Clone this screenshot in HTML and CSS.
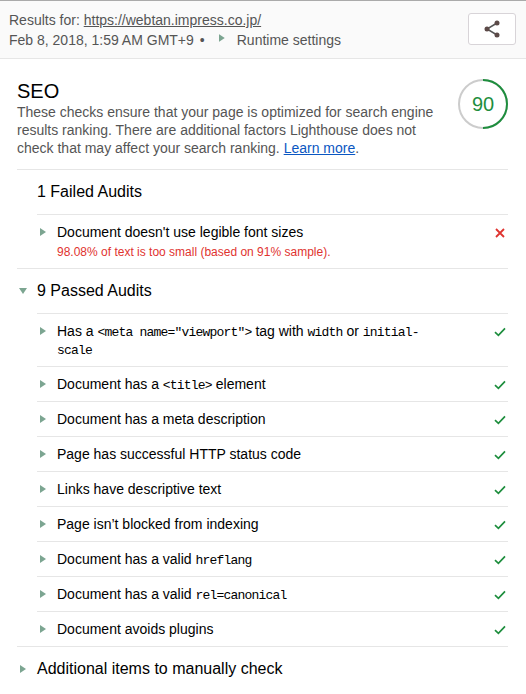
FILE: index.html
```
<!DOCTYPE html>
<html lang="en">
<head>
    <meta charset="UTF-8">
    <meta name="viewport" content="width=device-width, initial-scale=1.0">
    <title>Lighthouse Report</title>
    <link rel="stylesheet" href="styles.css">
</head>
<body>

<svg class="defs">
    <symbol id="check" viewBox="0 0 12 12">
        <path d="M1 6.2 L4.4 9.4 L11 2.4" fill="none" stroke="#1e8e3e" stroke-width="1.7"/>
    </symbol>
</svg>

<header class="header">
    <div class="header-info">
        <div>Results for: <a href="#" class="header-url">https://webtan.impress.co.jp/</a></div>
        <div class="header-meta">
            <span class="header-date">Feb 8, 2018, 1:59 AM GMT+9</span>
            <span class="dot">•</span>
            <span class="arrow"></span>
            <span class="header-settings">Runtime settings</span>
        </div>
    </div>
    <button class="share" aria-label="Share">
        <svg width="16" height="18" viewBox="0 0 16 18">
            <path d="M13 3 L3 9 L13 15" fill="none" stroke="#555" stroke-width="1.5"/>
            <circle cx="13" cy="3" r="2.5"/>
            <circle cx="3" cy="9" r="2.5"/>
            <circle cx="13" cy="15" r="2.5"/>
        </svg>
    </button>
</header>

<main class="category">
    <div class="category-header">
        <div class="category-text">
            <h1>SEO</h1>
            <p class="description">
                <span class="line">These checks ensure that your page is optimized for search engine</span>
                <span class="line">results ranking. There are additional factors Lighthouse does not</span>
                <span class="line">check that may affect your search ranking. <a href="#">Learn more</a>.</span>
            </p>
        </div>
        <div class="gauge">
            <svg class="gauge-ring" width="50" height="50" viewBox="0 0 50 50">
                <circle cx="25" cy="25" r="24" fill="none" stroke="#ccc" stroke-width="2"/>
                <path d="M25 1 A24 24 0 0 1 25 49" fill="none" stroke="#1e8e3e" stroke-width="2"/>
            </svg>
            <span class="gauge-score">90</span>
        </div>
    </div>

    <section class="group">
        <h2 class="group-title">1 Failed Audits</h2>
        <div class="audit audit-failed">
            <span class="arrow"></span>
            <div class="audit-text">
                Document doesn't use legible font sizes
                <div class="audit-error">98.08% of text is too small (based on 91% sample).</div>
            </div>
            <svg class="icon" width="12" height="12" viewBox="0 0 12 12">
                <path d="M2 2 L10 10 M10 2 L2 10" fill="none" stroke="#df332f" stroke-width="1.8"/>
            </svg>
        </div>
    </section>

    <section class="group">
        <h2 class="group-title"><span class="arrow arrow-down"></span>9 Passed Audits</h2>
        <div class="audit audit-tall">
            <span class="arrow"></span>
            <div class="audit-text">Has a <code>&lt;meta name="viewport"&gt;</code> tag with <code>width</code> or <code>initial-<br>scale</code></div>
            <svg class="icon" width="12" height="12"><use href="#check"/></svg>
        </div>
        <div class="audit">
            <span class="arrow"></span>
            <div class="audit-text">Document has a <code>&lt;title&gt;</code> element</div>
            <svg class="icon" width="12" height="12"><use href="#check"/></svg>
        </div>
        <div class="audit">
            <span class="arrow"></span>
            <div class="audit-text">Document has a meta description</div>
            <svg class="icon" width="12" height="12"><use href="#check"/></svg>
        </div>
        <div class="audit">
            <span class="arrow"></span>
            <div class="audit-text">Page has successful HTTP status code</div>
            <svg class="icon" width="12" height="12"><use href="#check"/></svg>
        </div>
        <div class="audit">
            <span class="arrow"></span>
            <div class="audit-text">Links have descriptive text</div>
            <svg class="icon" width="12" height="12"><use href="#check"/></svg>
        </div>
        <div class="audit">
            <span class="arrow"></span>
            <div class="audit-text">Page isn’t blocked from indexing</div>
            <svg class="icon" width="12" height="12"><use href="#check"/></svg>
        </div>
        <div class="audit">
            <span class="arrow"></span>
            <div class="audit-text">Document has a valid <code>hreflang</code></div>
            <svg class="icon" width="12" height="12"><use href="#check"/></svg>
        </div>
        <div class="audit">
            <span class="arrow"></span>
            <div class="audit-text">Document has a valid <code>rel=canonical</code></div>
            <svg class="icon" width="12" height="12"><use href="#check"/></svg>
        </div>
        <div class="audit">
            <span class="arrow"></span>
            <div class="audit-text">Document avoids plugins</div>
            <svg class="icon" width="12" height="12"><use href="#check"/></svg>
        </div>
    </section>

    <section class="group">
        <h2 class="group-title"><span class="arrow"></span>Additional items to manually check</h2>
    </section>
</main>

</body>
</html>
```
FILE: styles.css
```
* {
    box-sizing: border-box;
}
body {
    margin: 0;
    background: #fff;
    color: #000;
    font-family: "Liberation Sans", Arial, sans-serif;
    font-size: 14px;
    line-height: 18px;
    overflow: hidden;
}
.defs {
    display: none;
}

/* Header */
.header {
    display: flex;
    justify-content: space-between;
    height: 59px;
    padding: 9px 10px 0 9px;
    background: #fafafa;
    border-top: 1px solid #aaa;
    border-bottom: 1px solid #e6e6e6;
    color: #555;
    line-height: 20px;
}
.header-url {
    color: #555;
}
.header-meta {
    display: flex;
}
.dot {
    margin-left: 6px;
}
.header-meta .arrow {
    margin: 4px 12px 0 14px;
}
.share {
    display: flex;
    align-items: center;
    justify-content: center;
    width: 48px;
    height: 32px;
    margin-top: 3px;
    padding: 0;
    background: #fff;
    border: 1px solid #d8d4d8;
    border-radius: 3px;
    fill: #5c4a48;
}

/* Small disclosure triangles */
.arrow {
    flex: none;
    width: 6px;
    height: 8px;
    background: #7ca591;
    clip-path: polygon(0 0, 100% 50%, 0 100%);
}
.arrow-down {
    width: 8px;
    height: 6px;
    clip-path: polygon(0 0, 100% 0, 50% 100%);
}

/* Category */
.category {
    padding: 20px 18px 0 17px;
}
.category-header {
    display: flex;
    justify-content: space-between;
    height: 90px;
}
h1 {
    margin: 0;
    font-size: 20px;
    font-weight: normal;
    line-height: 24px;
}
.description {
    margin: 0;
    color: #555;
}
.line {
    display: block;
    white-space: nowrap;
}
.description a {
    color: #0b57c2;
}
.gauge {
    display: grid;
    place-items: center;
    width: 50px;
    height: 50px;
    color: #1e8e3e;
    font-size: 20px;
}
.gauge-ring,
.gauge-score {
    grid-area: 1 / 1;
}
.group {
    border-top: 1px solid #e6e6e6;
}
.group-title {
    display: flex;
    align-items: center;
    height: 44px;
    margin: 0;
    padding-left: 20px;
    font-size: 16px;
    font-weight: normal;
}
.group-title .arrow {
    margin-left: -17px;
    margin-right: 11px;
}
.group-title .arrow-down {
    margin-left: -18px;
    margin-right: 10px;
}

/* Audits */
.audit {
    display: flex;
    height: 35px;
    margin-left: 20px;
    padding: 8px 2px 0 3px;
    border-top: 1px solid #e6e6e6;
}
.audit-failed {
    height: 54px;
}
.audit-tall {
    height: 53px;
}
.audit .arrow {
    margin-top: 5px;
}
.audit-text {
    flex: 1;
    padding-left: 11px;
    white-space: nowrap;
}
.audit-error {
    color: #df332f;
    font-size: 12px;
    line-height: 22px;
}
.icon {
    margin-top: 4px;
}
code {
    font-family: "Liberation Mono", monospace;
    font-size: 13px;
    letter-spacing: -0.8px;
    line-height: 1;
}
```
